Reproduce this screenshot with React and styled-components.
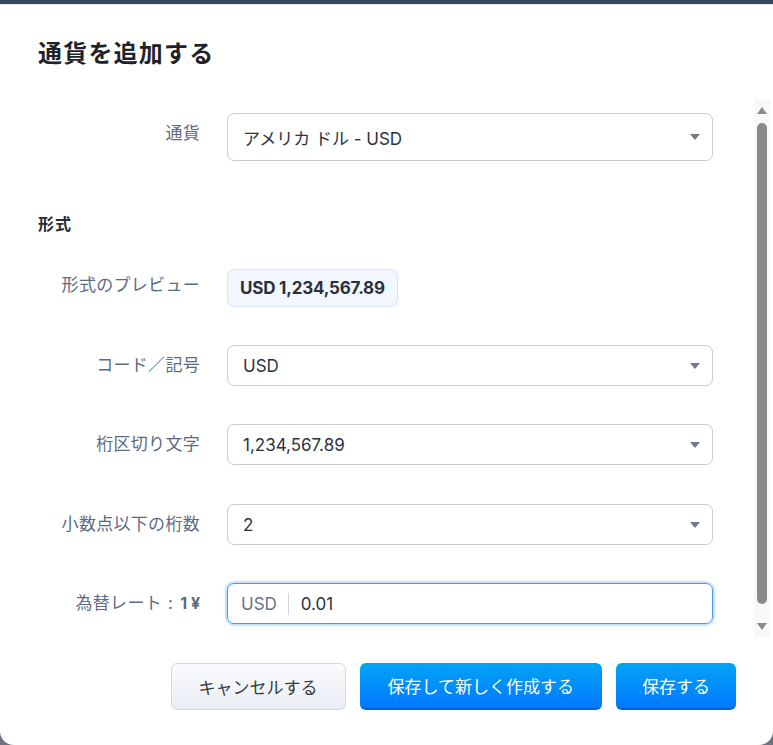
import React from "react";
import styled, { createGlobalStyle } from "styled-components";

const Global = createGlobalStyle`
  html, body { margin: 0; padding: 0; }
  body {
    background: #6e7383;
    overflow: hidden;
    font-family: Inter, "Noto Sans CJK JP", sans-serif;
  }
`;

const Backdrop = styled.div`
  height: 745px;
  box-sizing: border-box;
  border-top: 4px solid #35475a;
  display: flex;
  flex-direction: column;
`;

const Modal = styled.div`
  flex: 1;
  background: #fff;
  border-top: 1px solid #e3e6ea;
  border-radius: 0 0 14px 14px;
  display: flex;
  flex-direction: column;
`;

const Header = styled.div`
  padding: 33px 38px 0;
  height: 95px;
  box-sizing: border-box;
`;

const Title = styled.h1`
  margin: 0;
  font-size: 24px;
  line-height: 32px;
  font-weight: 700;
  letter-spacing: 1.2px;
  color: #1f2329;
`;

const Body = styled.div`
  display: flex;
  height: 537px;
`;

const Content = styled.div`
  flex: 1;
  padding: 13px 41px 0 38px;
  display: flex;
  flex-direction: column;
  overflow: hidden;
`;

const Row = styled.div`
  display: grid;
  grid-template-columns: 162px 1fr;
  column-gap: 27px;
  align-items: start;
  margin-top: ${(p) => p.$mt || 0}px;
`;

const Label = styled.div`
  text-align: right;
  font-size: 17px;
  line-height: ${(p) => p.$lh || 40}px;
  letter-spacing: 0.3px;
  color: #5d6a83;
  white-space: nowrap;
`;

const Colon = styled.span`
  margin: 0 7px 0 6px;
`;

const Strong = styled.b`
  font-weight: 700;
  font-family: Inter, sans-serif;
  font-size: 16px;
  letter-spacing: 0;
`;

const Section = styled.h2`
  margin: 51px 0 0;
  font-size: 16px;
  line-height: 24px;
  font-weight: 700;
  letter-spacing: 1px;
  color: #262b36;
`;

const SelectBox = styled.div`
  height: ${(p) => p.$h || 41}px;
  box-sizing: border-box;
  border: 1px solid #c8cbd1;
  border-radius: 7px;
  background: #fff;
  display: flex;
  align-items: center;
  justify-content: space-between;
  padding: 0 12px 0 15px;
  font-size: 17px;
  color: #2c3240;
`;

const Caret = styled.span`
  width: 0;
  height: 0;
  border-left: 5.5px solid transparent;
  border-right: 5.5px solid transparent;
  border-top: 6px solid #737986;
`;

const Badge = styled.div`
  justify-self: start;
  height: 38px;
  box-sizing: border-box;
  padding: 0 12px;
  display: flex;
  align-items: center;
  background: #f2f6fe;
  border: 1px solid #d9e3f2;
  border-radius: 7px;
  font-weight: 700;
  font-size: 17px;
  letter-spacing: -0.2px;
  color: #2a303d;
`;

const RateBox = styled.div`
  height: 41px;
  box-sizing: border-box;
  border: 1px solid #4a97ee;
  border-radius: 7px;
  box-shadow: 0 0 0 2px rgba(74, 151, 238, 0.18), 0 0 4px rgba(74, 151, 238, 0.35);
  display: flex;
  align-items: center;
  padding-left: 13px;
  font-size: 17px;
`;

const Prefix = styled.span`
  color: #687286;
  padding-right: 11px;
  border-right: 1px solid #d3d6dc;
  line-height: 22px;
`;

const Value = styled.span`
  color: #2c3240;
  padding-left: 12px;
`;

const Scrollbar = styled.div`
  width: 16px;
  margin-right: 3px;
  background: #f8f8f8;
  display: flex;
  flex-direction: column;
  align-items: center;
  padding: 7px 0;
  box-sizing: border-box;
`;

const Arrow = styled.span`
  width: 0;
  height: 0;
  border-left: 5.5px solid transparent;
  border-right: 5.5px solid transparent;
  ${(p) =>
    p.$up
      ? "border-bottom: 7px solid #8a8a8a;"
      : "border-top: 7px solid #8a8a8a;"}
`;

const Thumb = styled.div`
  flex: 1;
  width: 10px;
  margin: 9px 0 19px;
  border-radius: 5px;
  background: #8b8b8b;
`;

const Footer = styled.div`
  display: flex;
  justify-content: flex-end;
  gap: 14px;
  padding: 26px 37px 0 0;
`;

const Button = styled.button`
  height: 47px;
  padding: 0 ${(p) => p.$px || 26}px;
  border-radius: 6px;
  font-family: Inter, "Noto Sans CJK JP", sans-serif;
  font-size: 17px;
  cursor: pointer;
  ${(p) =>
    p.$primary
      ? `
    color: #fff;
    border: none;
    border-bottom: 2px solid #0063d4;
    background: linear-gradient(#02a4f5, #0078ff);
  `
      : `
    color: #353a44;
    border: 1px solid #d4d8e0;
    background: linear-gradient(#fafbfd, #eaedf4);
  `}
`;

export default function App() {
  return (
    <>
      <Global />
      <Backdrop>
        <Modal>
          <Header>
            <Title>通貨を追加する</Title>
          </Header>
          <Body>
            <Content>
              <Row>
                <Label>通貨</Label>
                <SelectBox $h={48}>
                  アメリカ ドル - USD
                  <Caret />
                </SelectBox>
              </Row>
              <Section>形式</Section>
              <Row $mt={33}>
                <Label $lh={32}>形式のプレビュー</Label>
                <Badge>USD 1,234,567.89</Badge>
              </Row>
              <Row $mt={38}>
                <Label>コード／記号</Label>
                <SelectBox>
                  USD
                  <Caret />
                </SelectBox>
              </Row>
              <Row $mt={38}>
                <Label>桁区切り文字</Label>
                <SelectBox>
                  1,234,567.89
                  <Caret />
                </SelectBox>
              </Row>
              <Row $mt={39}>
                <Label>小数点以下の桁数</Label>
                <SelectBox>
                  2
                  <Caret />
                </SelectBox>
              </Row>
              <Row $mt={38}>
                <Label>
                  為替レート<Colon>:</Colon>
                  <Strong>1 ¥</Strong>
                </Label>
                <RateBox>
                  <Prefix>USD</Prefix>
                  <Value>0.01</Value>
                </RateBox>
              </Row>
            </Content>
            <Scrollbar>
              <Arrow $up />
              <Thumb />
              <Arrow />
            </Scrollbar>
          </Body>
          <Footer>
            <Button $px={27}>キャンセルする</Button>
            <Button $primary $px={28}>保存して新しく作成する</Button>
            <Button $primary>保存する</Button>
          </Footer>
        </Modal>
      </Backdrop>
    </>
  );
}
